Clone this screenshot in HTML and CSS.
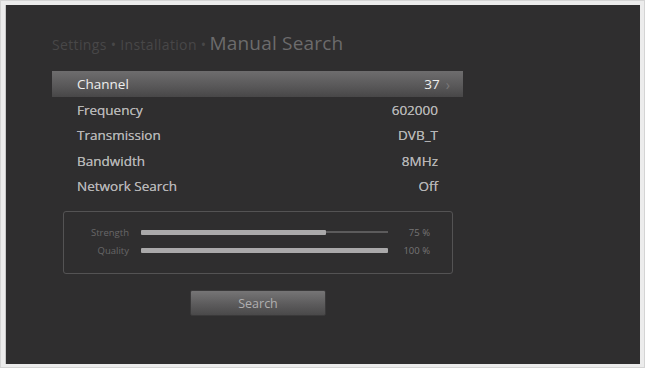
FILE: index.html
```html
<!DOCTYPE html>
<html>
<head>
<meta charset="utf-8">
<link rel="stylesheet" href="styles.css">
</head>
<body>
<div class="frame">
  <div class="screen">
    <div class="crumb"><span class="path">Settings • Installation •</span> <span class="title">Manual Search</span></div>
    <div class="list">
      <div class="row sel"><span>Channel</span><span class="val">37<span class="chev">›</span></span></div>
      <div class="row"><span>Frequency</span><span class="val">602000</span></div>
      <div class="row"><span>Transmission</span><span class="val">DVB_T</span></div>
      <div class="row"><span>Bandwidth</span><span class="val">8MHz</span></div>
      <div class="row"><span>Network Search</span><span class="val">Off</span></div>
    </div>
    <div class="signal">
      <div class="sig">
        <span class="sl">Strength</span>
        <div class="track"><div class="fill" style="width:75%"></div></div>
        <span class="sv">75 %</span>
      </div>
      <div class="sig">
        <span class="sl">Quality</span>
        <div class="track"><div class="fill" style="width:100%"></div></div>
        <span class="sv">100 %</span>
      </div>
    </div>
    <div class="btnrow"><div class="btn">Search</div></div>
  </div>
</div>
</body>
</html>
```
FILE: styles.css
```css
html, body { margin: 0; padding: 0; }
body {
  width: 645px; height: 368px; overflow: hidden;
  background: #f4f4f4;
  font-family: "Open Sans", "Noto Sans", sans-serif;
}
.frame {
  box-sizing: border-box;
  width: 645px; height: 368px;
  padding: 4px;
  border: 1px solid #d4d4d4;
  background: #ececec;
}
.screen {
  box-sizing: border-box;
  height: 359px;
  background: #2f2e2f;
  border-left: 1px solid #c8c8c8;
  padding: 25px 0 0 46px;
}
.crumb {
  height: 41px;
  display: flex; align-items: baseline; gap: 3px;
}
.path { color: #484748; font-size: 14px; letter-spacing: 0.35px; }
.title { color: #6c6b6c; font-size: 19px; letter-spacing: 0.2px; }
.list { width: 411px; }
.row {
  height: 25.5px;
  display: flex; justify-content: space-between; align-items: center;
  padding: 0 25px 0 25px;
  color: #b6b5b6; font-size: 13.5px;
  text-shadow: 0 0 0.4px #b6b5b6;
}
.row.sel {
  height: 26px;
  background: linear-gradient(#6e6d6e, #5a595a 55%, #484748);
  color: #eeeeee; font-size: 13.5px;
  padding-right: 13px;
  text-shadow: none;
}
.val { display: flex; align-items: center; }
.chev { color: #7a797a; margin-left: 6px; font-size: 14px; }
.signal {
  box-sizing: border-box;
  width: 390px; height: 63px;
  margin: 12px 0 0 11px;
  border: 1.5px solid #545354;
  border-radius: 3px;
  padding: 11px 0 0 0;
}
.sig { display: flex; align-items: center; height: 18px; }
.sl {
  width: 65px; text-align: right;
  color: #686768; font-size: 9.5px;
}
.track {
  width: 247px; height: 2px; margin-left: 12px;
  background: #5c5b5c;
  display: flex; align-items: center;
}
.fill { height: 5px; background: #aaa9aa; border-radius: 1px; }
.sv { color: #767576; font-size: 9.5px; width: 42px; text-align: right; }
.btnrow { display: flex; padding: 16px 0 0 138px; }
.btn {
  width: 134px; height: 24px;
  background: linear-gradient(#767576, #5a595a 60%, #4a494a);
  border: 1px solid #3a393a;
  border-radius: 2px;
  color: #b0afb0; font-size: 12.5px;
  display: flex; align-items: center; justify-content: center;
}
```
